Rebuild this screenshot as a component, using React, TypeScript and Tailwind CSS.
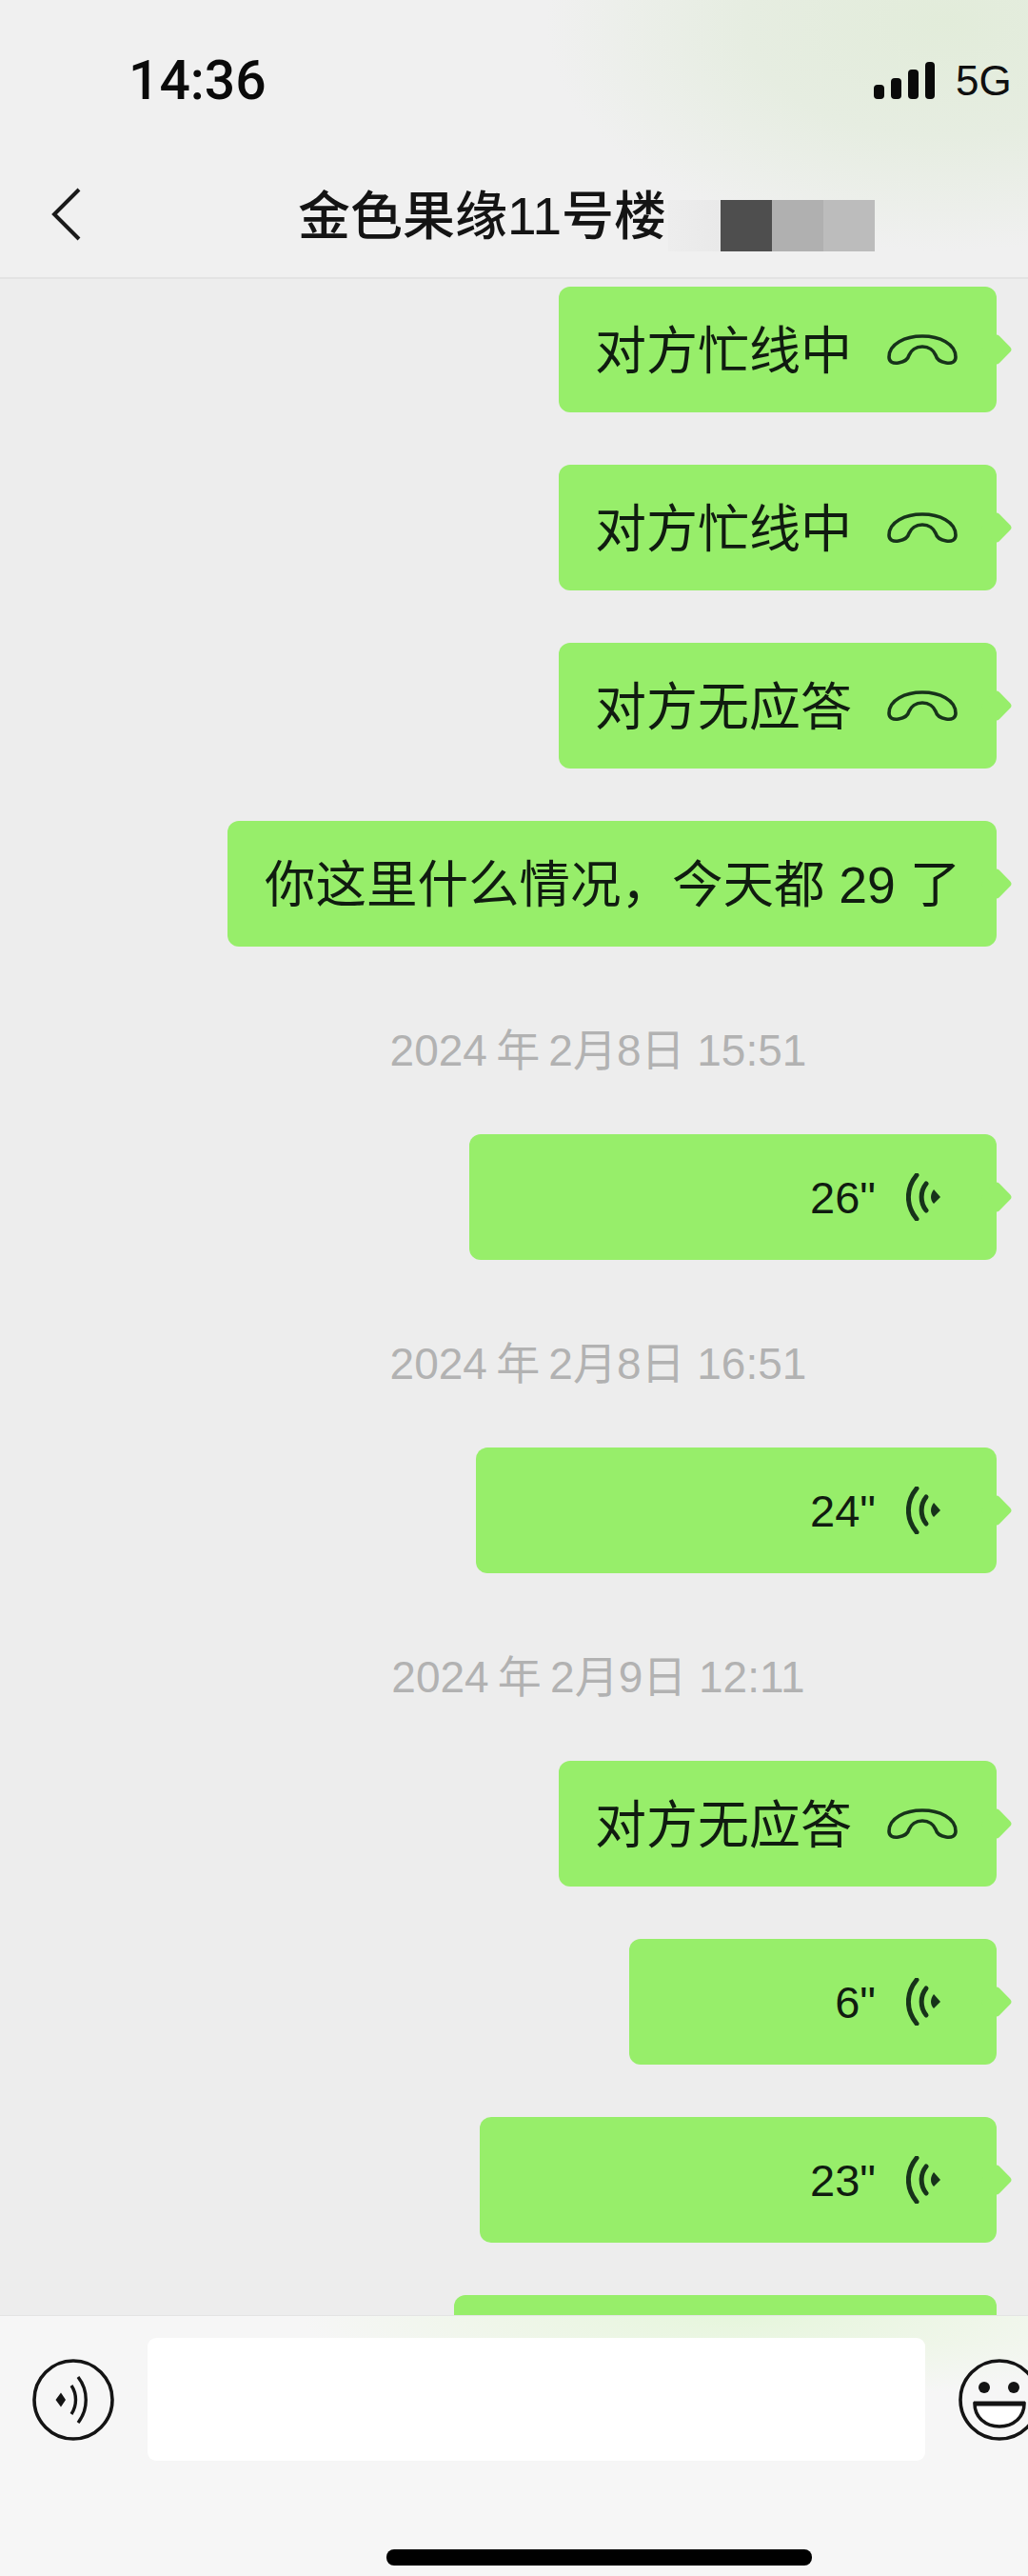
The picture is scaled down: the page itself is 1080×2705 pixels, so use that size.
function PhoneIcon() {
  return (
    <svg width="76" height="34" viewBox="0 0 76 34" fill="none" stroke="#17331a" strokeWidth="3.6" className="shrink-0">
      <path d="M3 25C3 11 20 3 38 3C56 3 73 11 73 25C73 30 69 32 63 31C57 30 53 27 52 23C50 18 45 14 38 14C31 14 26 18 24 23C23 27 19 30 13 31C7 32 3 30 3 25Z" />
    </svg>
  )
}

function VoiceIcon() {
  return (
    <svg width="36" height="50" viewBox="0 0 36 50" fill="none" className="shrink-0">
      <path d="M11 2C-0.5 16 -0.5 34 11 48" stroke="#17331a" strokeWidth="5" strokeLinecap="round" />
      <path d="M21 11C14.5 19 14.5 31 21 39" stroke="#17331a" strokeWidth="5" strokeLinecap="round" />
      <path d="M29 17L36 25L29 32C25 28 25 22 29 17Z" fill="#17331a" />
    </svg>
  )
}

function Bubble({ width, children, pr, mb }: { width: number; children: React.ReactNode; pr: string; mb?: string }) {
  return (
    <div
      className={`relative flex h-[132px] shrink-0 items-center justify-between rounded-[12px] bg-[#97ee6a] pl-[38px] text-[#101c10] ${pr} ${mb ?? 'mb-[55px]'}`}
      style={{ width }}
    >
      <div className="absolute right-[-12px] top-[54px] h-[24px] w-[24px] rotate-45 rounded-[4px] bg-[#97ee6a]"></div>
      {children}
    </div>
  )
}

function CallBubble({ text }: { text: string }) {
  return (
    <Bubble width={460} pr="pr-[40px]">
      <span className="pt-[3px] text-[54px] leading-none">{text}</span>
      <PhoneIcon />
    </Bubble>
  )
}

function VoiceBubble({ width, secs, mb }: { width: number; secs: string; mb?: string }) {
  return (
    <Bubble width={width} pr="pr-[59px]" mb={mb}>
      <span></span>
      <div className="relative flex items-center gap-[32px]">
        <span className="text-[47px] leading-none">{secs}&quot;</span>
        <VoiceIcon />
      </div>
    </Bubble>
  )
}

function Time({ text }: { text: string }) {
  return (
    <div className="mb-[59px] w-full pl-[210px] text-center text-[46px] leading-[58px] text-[#b2b2b2]">
      {text}
    </div>
  )
}

export default function App() {
  return (
    <div className="relative flex h-[2705px] w-[1080px] flex-col overflow-hidden bg-[#ededed] font-['Liberation_Sans','Noto_Sans_CJK_SC',sans-serif]">
      {/* status bar + nav */}
      <header className="flex h-[293px] shrink-0 flex-col border-b-2 border-[#e3e3e3] bg-[#f0f0f0] bg-[radial-gradient(ellipse_420px_240px_at_92%_8%,#e2ecda_0%,#e6ede1_50%,#f0f0f0_100%)]">
        <div className="flex items-center pl-[135px] pt-[56px]">
          <span className="w-[143px] font-['Roboto','Liberation_Sans',sans-serif] text-[57px] font-medium leading-none text-[#0a0a0a]">14:36</span>
          <div className="ml-[640px] flex items-end gap-[7px]">
            <div className="h-[15px] w-[11px] rounded-[4px] bg-[#0a0a0a]"></div>
            <div className="h-[22px] w-[11px] rounded-[4px] bg-[#0a0a0a]"></div>
            <div className="h-[31px] w-[11px] rounded-[4px] bg-[#0a0a0a]"></div>
            <div className="h-[39px] w-[10px] rounded-[4px] bg-[#0a0a0a]"></div>
          </div>
          <span className="ml-[22px] text-[44px] leading-none text-[#0f0f0f]">5G</span>
        </div>
        <div className="relative mt-[84px] flex items-start pl-[52px]">
          <svg width="34" height="56" viewBox="0 0 34 56" fill="none" stroke="#1a1a1a" strokeWidth="4" className="shrink-0">
            <path d="M31 2L5 28L31 54" />
          </svg>
          <span className="ml-[227px] text-[55px] font-medium leading-[60px] text-[#141414]">金色果缘11号楼</span>
          <div className="ml-[2px] mt-[13px] flex h-[54px] shrink-0">
            <div className="w-[55px] bg-gradient-to-r from-[#ededed] to-[#e9e9e9]"></div>
            <div className="w-[54px] bg-[#4e4e4e]"></div>
            <div className="w-[54px] bg-[#b0b0b0]"></div>
            <div className="w-[54px] bg-[#bcbcbc]"></div>
          </div>
        </div>
      </header>

      {/* messages */}
      <main className="flex min-h-0 flex-1 flex-col items-end overflow-hidden pr-[33px] pt-[8px]">
        <CallBubble text="对方忙线中" />
        <CallBubble text="对方忙线中" />
        <CallBubble text="对方无应答" />
        <Bubble width={808} pr="pr-[40px]" mb="mb-[80px]">
          <span className="whitespace-nowrap pl-[1px] pt-[3px] text-[53.5px] leading-none">你这里什么情况，今天都 29 了</span>
        </Bubble>
        <Time text={'2024\u2009年\u20092月8日 15:51'} />
        <VoiceBubble width={554} secs="26" mb="mb-[80px]" />
        <Time text={'2024\u2009年\u20092月8日 16:51'} />
        <VoiceBubble width={547} secs="24" mb="mb-[80px]" />
        <Time text={'2024\u2009年\u20092月9日 12:11'} />
        <CallBubble text="对方无应答" />
        <VoiceBubble width={386} secs="6" />
        <VoiceBubble width={543} secs="23" />
        <Bubble width={570} pr="pr-[59px]">
          <span></span>
        </Bubble>
      </main>

      {/* input bar */}
      <footer className="relative flex h-[274px] shrink-0 flex-col overflow-hidden border-t border-[#e4e4e4] bg-[#f6f6f6] bg-[radial-gradient(ellipse_460px_90px_at_72%_0%,#e6f6dc_0%,#eff6e9_55%,#f6f6f6_100%)]">
        <div className="flex items-start gap-[35px] pl-[34px] pt-[23px]">
          <svg width="86" height="86" viewBox="0 0 86 86" fill="none" className="mt-[22px] shrink-0">
            <circle cx="43" cy="43" r="41" stroke="#141414" strokeWidth="3.6" />
            <path d="M30 35.5L24.5 43L30 50.5L35 43Z" fill="#141414" />
            <path d="M41 28C47 37 47 49 41 58" stroke="#141414" strokeWidth="3.4" />
            <path d="M48 19C59 33 59 53 48 67" stroke="#141414" strokeWidth="3.4" />
          </svg>
          <div className="h-[129px] w-[817px] shrink-0 rounded-[9px] bg-white"></div>
          <svg width="86" height="86" viewBox="0 0 86 86" fill="none" className="mt-[22px] shrink-0">
            <circle cx="43" cy="43" r="41" stroke="#141414" strokeWidth="3.6" />
            <circle cx="27" cy="30" r="6" fill="#141414" />
            <circle cx="58" cy="30" r="6" fill="#141414" />
            <path d="M17 47H69C69 61 58 71 43 71C28 71 17 61 17 47Z" stroke="#141414" strokeWidth="3.6" fill="white" />
            <path d="M16 47H70" stroke="#141414" strokeWidth="5" />
          </svg>
        </div>
        <div className="ml-[406px] mt-[93px] h-[17px] w-[447px] rounded-[8px] bg-black"></div>
      </footer>
    </div>
  )
}
